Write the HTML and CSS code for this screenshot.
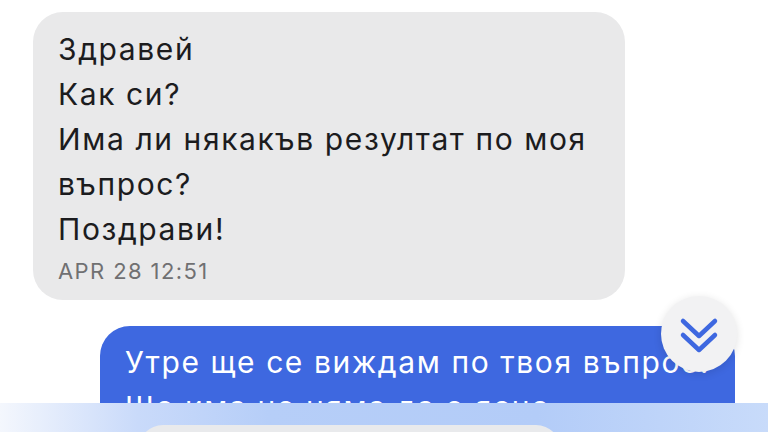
FILE: index.html
```html
<!DOCTYPE html>
<html lang="bg">
<head>
    <meta charset="UTF-8">
    <meta name="viewport" content="width=device-width, initial-scale=1.0">
    <title>Съобщения</title>
    <link rel="stylesheet" href="styles.css">
</head>
<body>

<main class="chat">
    <div class="msg msg-in">
        <div class="bubble bubble-in">
            <p class="bubble-text">Здравей<br>Как си?<br>Има ли някакъв резултат по моя въпрос?<br>Поздрави!</p>
            <span class="time">APR 28 12:51</span>
        </div>
    </div>

    <div class="msg msg-out">
        <div class="bubble bubble-out">
            <p class="bubble-text">Утре ще се виждам по твоя въпрос.<br>Ще има не няма да е ясно.</p>
        </div>
    </div>
</main>

<!-- scroll to bottom -->
<button class="scroll-down" aria-label="Към последното съобщение">
    <svg width="40" height="40" viewBox="0 0 40 40" fill="none" stroke="#3e68e0" stroke-width="4.5" stroke-linecap="round" stroke-linejoin="round">
        <polyline points="4,6 20,21 36,6"/>
        <polyline points="4,20 20,35 36,20"/>
    </svg>
</button>

<footer class="composer">
    <div class="composer-input"></div>
</footer>

</body>
</html>
```

FILE: styles.css
```css
body {
    font-family: Inter, "Noto Sans", sans-serif;
    background-color: #ffffff;
    color: #1c1c1e;
    margin: 0;
    padding: 0;
    width: 768px;
    height: 432px;
    overflow: hidden;
}

.chat {
    display: flex;
    flex-direction: column;
    gap: 26px;
    padding: 12px 33px 0 33px;
}

.msg {
    display: flex;
}

.msg-in {
    justify-content: flex-start;
}

.msg-out {
    justify-content: flex-end;
}

.bubble {
    border-radius: 30px;
    padding: 15px 25px;
}

.bubble-text {
    margin: 0;
    font-size: 30px;
    line-height: 45px;
    letter-spacing: 1.6px;
}

.bubble-in {
    background-color: #e9e9ea;
    width: 542px;
}

.bubble-out {
    background-color: #3e68e0;
    color: #ffffff;
    width: 585px;
    height: 78px;
    padding: 14px 25px;
    border-radius: 30px 30px 0 0;
    overflow: hidden;
}

.bubble-out .bubble-text {
    white-space: nowrap;
}

.time {
    display: block;
    margin-top: 5px;
    font-size: 22px;
    line-height: 28px;
    letter-spacing: 1.4px;
    color: #707072;
}

/* floating button */
.scroll-down {
    position: absolute;
    left: 661px;
    top: 296px;
    width: 76px;
    height: 76px;
    border: none;
    border-radius: 50%;
    background-color: #f2f2f3;
    box-shadow: 0 2px 8px rgba(0, 0, 0, 0.12);
    display: flex;
    align-items: center;
    justify-content: center;
    padding: 0;
    cursor: pointer;
}

.scroll-down svg {
    margin-top: 2px;
}

/* bottom bar */
.composer {
    position: absolute;
    left: 0;
    top: 403px;
    width: 768px;
    height: 29px;
    overflow: hidden;
    background: linear-gradient(90deg, #f4f7fd 0%, #c9dafa 18%, #b6cef8 35%, #b3ccf8 70%, #c8dbfa 100%);
}

.composer-input {
    margin: 22px 0 0 138px;
    width: 423px;
    height: 50px;
    border-radius: 25px;
    background-color: #e9eaec;
}
```
